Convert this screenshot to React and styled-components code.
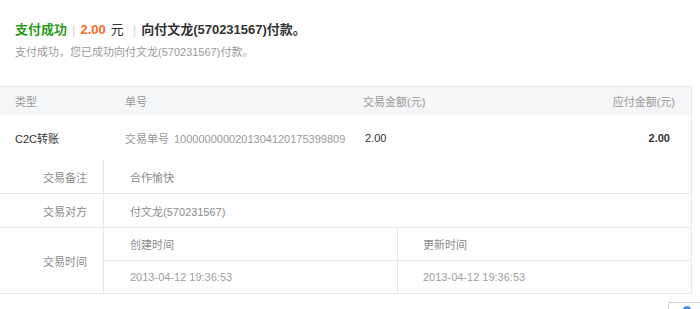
import React from 'react';
import styled, {createGlobalStyle} from 'styled-components';

const GlobalStyle=createGlobalStyle`
  html,body{
    margin:0;
    padding:0;
    background:#fff;
    overflow:hidden;
  }
  body{
    font-family:"Liberation Sans","Noto Sans CJK SC",sans-serif;
    font-size:11px;
    color:#333;
  }
`;

const Page=styled.div`
  width:700px;
`;

const Summary=styled.div`
  padding:20px 0 0 15px;
`;

const Title=styled.div`
  display:flex;
  align-items:center;
  height:20px;
  font-size:13px;
  line-height:20px;
  font-weight:bold;
  color:#333;
`;

const Success=styled.span`
  color:#2e9b1c;
`;

const Sep=styled.span`
  color:#d8d8d8;
  font-weight:normal;
  margin:0 ${p=>p.right||5}px 0 ${p=>p.left||5}px;
`;

const Money=styled.span`
  color:#ff6a2a;
`;

const Unit=styled.span`
  font-weight:normal;
  margin-left:5px;
`;

const SubLine=styled.div`
  margin-top:4px;
  height:16px;
  line-height:16px;
  color:#9a9a9a;
`;

const Table=styled.div`
  margin-top:26px;
  width:692px;
  box-sizing:border-box;
  border-top:1px solid #e8e8e8;
  border-right:1px solid #e8e8e8;
`;

const Row=styled.div`
  display:grid;
  grid-template-columns:125px 238px 1fr 160px;
  align-items:center;
  height:${p=>p.h}px;
  background:${p=>p.head?'#f5f6f7':'#fff'};
  color:${p=>p.head?'#9a9a9a':'#333'};
`;

const Cell=styled.div`
  padding-left:${p=>p.pl||0}px;
  padding-right:${p=>p.pr||0}px;
  text-align:${p=>p.right?'right':'left'};
  font-weight:${p=>p.bold?'bold':'normal'};
  color:${p=>p.muted?'#9a9a9a':'inherit'};
  white-space:nowrap;
`;

const Label=styled.span`
  margin-right:5px;
`;

const Detail=styled.div`
  display:grid;
  grid-template-columns:104px 1fr;
`;

const Key=styled.div`
  display:flex;
  align-items:center;
  justify-content:flex-end;
  padding-right:16px;
  height:${p=>p.h?p.h+'px':'auto'};
  border-right:1px solid #e8e8e8;
  border-bottom:1px solid #e8e8e8;
  color:#8c8c8c;
`;

const Value=styled.div`
  display:flex;
  align-items:center;
  padding-left:26px;
  height:${p=>p.h}px;
  border-bottom:1px solid #e8e8e8;
  color:#8c8c8c;
`;

const TimeGrid=styled.div`
  display:grid;
  grid-template-columns:294px 1fr;
`;

const TimeCell=styled.div`
  display:flex;
  align-items:center;
  padding-left:${p=>p.first?26:25}px;
  height:${p=>p.h}px;
  border-bottom:1px solid #e8e8e8;
  border-right:${p=>p.first?'1px solid #e8e8e8':'none'};
  color:${p=>p.date?'#a0a0a0':'#8c8c8c'};
`;

const Footer=styled.div`
  display:flex;
  justify-content:flex-end;
  margin-top:8px;
`;

const MiniButton=styled.div`
  width:32px;
  height:20px;
  box-sizing:border-box;
  border:1px solid #d0d0d0;
  border-right:none;
  border-radius:2px 0 0 2px;
  padding:2px 0 0 13px;
`;

function App(){
  return (
    <Page>
      <GlobalStyle/>
      <Summary>
        <Title>
          <Success>支付成功</Success>
          <Sep>|</Sep>
          <Money>2.00</Money>
          <Unit>元</Unit>
          <Sep left={9} right={5}>|</Sep>
          <span>向付文龙(570231567)付款。</span>
        </Title>
        <SubLine>支付成功，您已成功向付文龙(570231567)付款。</SubLine>
      </Summary>

      <Table>
        <Row head h={28}>
          <Cell pl={15}>类型</Cell>
          <Cell>单号</Cell>
          <Cell>交易金额(元)</Cell>
          <Cell right pr={16}>应付金额(元)</Cell>
        </Row>
        <Row h={45}>
          <Cell pl={15}>C2C转账</Cell>
          <Cell muted><Label>交易单号</Label>1000000000201304120175399809</Cell>
          <Cell pl={2}>2.00</Cell>
          <Cell right bold pr={21}>2.00</Cell>
        </Row>
        <Detail>
          <Key h={33}>交易备注</Key>
          <Value h={33}>合作愉快</Value>
          <Key h={33}>交易对方</Key>
          <Value h={33}>付文龙(570231567)</Value>
          <Key>交易时间</Key>
          <TimeGrid>
            <TimeCell first h={32}>创建时间</TimeCell>
            <TimeCell h={32}>更新时间</TimeCell>
            <TimeCell first date h={32}>2013-04-12 19:36:53</TimeCell>
            <TimeCell date h={32}>2013-04-12 19:36:53</TimeCell>
          </TimeGrid>
        </Detail>
      </Table>

      <Footer>
        <MiniButton>
          <svg width="10" height="10" viewBox="0 0 10 10">
            <circle cx="5" cy="5" r="4" fill="#4a90e2"/>
          </svg>
        </MiniButton>
      </Footer>
    </Page>
  );
}

export default App;
